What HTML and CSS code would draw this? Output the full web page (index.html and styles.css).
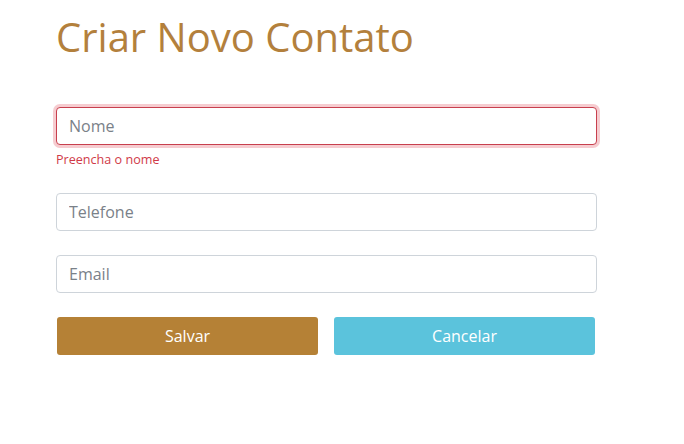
FILE: index.html
```html
<!DOCTYPE html>
<html lang="pt">
<head>
<meta charset="utf-8">
<link rel="stylesheet" href="styles.css">
</head>
<body>
<main class="page">
  <h1 class="title">Criar Novo Contato</h1>
  <form class="form">
    <div class="field field-first">
      <input class="input input-invalid" type="text" placeholder="Nome">
      <div class="error">Preencha o nome</div>
    </div>
    <div class="field">
      <input class="input" type="text" placeholder="Telefone">
    </div>
    <div class="field">
      <input class="input" type="text" placeholder="Email">
    </div>
    <div class="actions">
      <button type="button" class="btn btn-save">Salvar</button>
      <button type="button" class="btn btn-cancel">Cancelar</button>
    </div>
  </form>
</main>
</body>
</html>
```

FILE: styles.css
```css
* { box-sizing: border-box; }
html, body { margin: 0; background: #fff; }
body { font-family: "Open Sans", "Noto Sans", sans-serif; }
.page { padding: 12px 0 0 56px; width: 597px; }
.title {
  margin: 0;
  font-weight: 400;
  font-size: 40px;
  line-height: 50px;
  color: #b3803c;
}
.form { margin-top: 45px; display: flex; flex-direction: column; }
.field { margin-bottom: 24px; }
.field-first { margin-bottom: 25px; }
.input {
  display: block;
  width: 100%;
  height: 38px;
  padding: 0 12px;
  font-family: inherit;
  font-size: 16px;
  color: #495057;
  border: 1px solid #ced4da;
  border-radius: 4px;
  background: #fff;
  outline: none;
}
.input::placeholder { color: #7a8189; }
.input-invalid {
  border-color: #c8404e;
  box-shadow: 0 0 0 3px rgba(220, 53, 69, 0.25);
}
.error {
  margin-top: 7px;
  font-size: 12.6px;
  line-height: 16px;
  color: #d03a48;
}
.actions { display: flex; gap: 16px; padding: 0 2px 0 1px; }
.btn {
  flex: 1;
  height: 38px;
  border: none;
  border-radius: 3px;
  font-family: inherit;
  font-size: 16px;
  color: #fff;
}
.btn-save { background: #b58136; }
.btn-cancel { background: #5bc3dc; }
```
